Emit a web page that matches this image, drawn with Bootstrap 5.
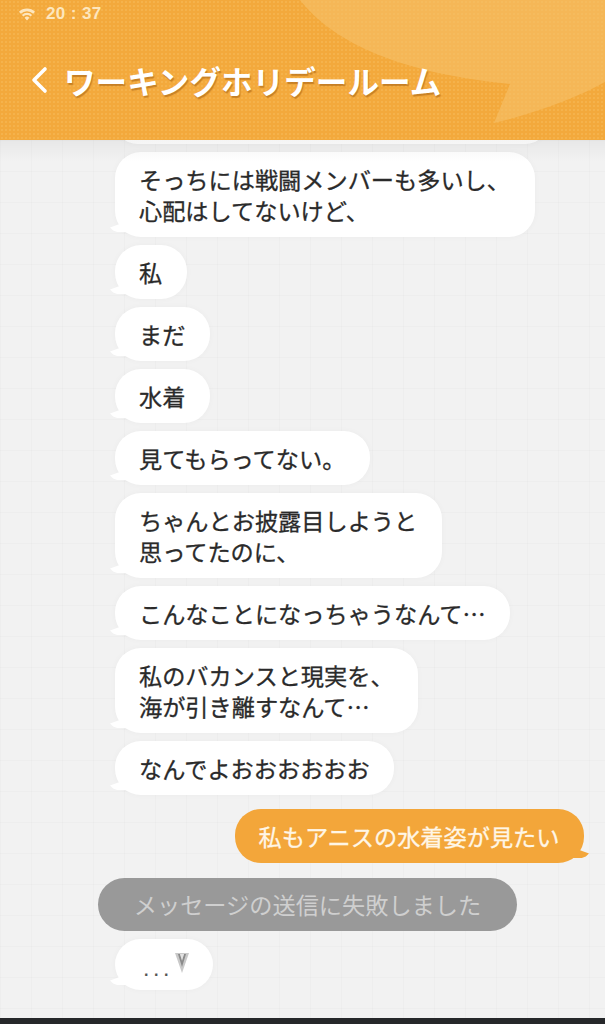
<!DOCTYPE html>
<html lang="ja">
<head>
<meta charset="utf-8">
<title>ワーキングホリデールーム</title>
<link href="https://cdn.jsdelivr.net/npm/bootstrap@5.3.0/dist/css/bootstrap.min.css" rel="stylesheet">
<style>
html,body{height:1024px;overflow:hidden;}
body{font-family:"Noto Sans CJK JP","Liberation Sans",sans-serif;background:#f1f1f1;}
.screen{height:1024px;}
.top-head{height:140px;flex:none;background-color:#f3a93c;background-image:radial-gradient(circle,rgba(255,225,160,.16) .8px,transparent 1.1px);background-size:4px 4px;color:#fff;z-index:2;}
.head-art{position:absolute;inset:0;width:100%;height:100%;}
.status-row{height:28px;padding-left:18px;gap:10px;color:#fde6bd;font-size:17px;font-weight:700;line-height:28px;font-family:"Liberation Sans",sans-serif;letter-spacing:.4px;}
.title-row{margin-top:30px;padding-left:30px;gap:16px;}
.room-title{font-size:31.6px;font-weight:700;line-height:44px;margin:0;text-shadow:1px 2px 1px rgba(170,100,20,.6);}
.chat-area{flex:1 1 auto;min-height:0;overflow:hidden;background-color:#f2f2f2;background-image:linear-gradient(rgba(0,0,0,.016) 1px,transparent 1px),linear-gradient(90deg,rgba(0,0,0,.016) 1px,transparent 1px);background-size:31px 31px;}
.chat-fade{position:absolute;left:0;right:0;top:0;height:22px;background:linear-gradient(rgba(0,0,0,.045),transparent);z-index:1;}
.msg-list{gap:8px;margin-top:-41px;}
.bubble-in,.bubble-out{position:relative;width:fit-content;font-size:23.2px;font-weight:400;-webkit-text-stroke:.3px currentColor;line-height:31px;padding:11.5px 24.500px 11.500px 24px;border-radius:26px;white-space:nowrap;}
.bubble-in{margin-left:115px;background:#fff;color:#2a2a2a;box-shadow:0 0 6px rgba(0,0,0,.03);}
.bubble-in::before{content:"";position:absolute;left:-5px;bottom:5px;width:16px;height:8px;background:#fff;clip-path:polygon(0 45%,60% 0,100% 0,100% 100%,45% 100%,20% 80%);}
.bubble-out{align-self:flex-end;margin-right:21px;margin-top:6px;background:#f3a63a;color:#fff6e6;}
.bubble-out::after{content:"";position:absolute;right:-5px;bottom:5px;width:16px;height:8px;background:#f3a63a;clip-path:polygon(100% 45%,40% 0,0 0,0 100%,55% 100%,80% 80%);}
.stub{width:433px;height:45px;}
.stub::before{display:none;}
.sys-msg{width:419px;height:53px;margin-left:98px;margin-top:7px;background:#999;color:#cfcfcf;font-size:23.2px;line-height:53px;border-radius:27px;text-align:center;}
.typing{width:98px;height:51px;padding:0 0 0 29px;color:#555;-webkit-text-stroke:0;}
.typing-dots{font-size:16px;font-weight:700;letter-spacing:5.500px;line-height:1;margin-top:13px;font-family:"Liberation Sans",sans-serif;}
.typing-mark{margin:0 0 3px 1px;}
.base-bar{height:6px;flex:none;background:#26282a;}
</style>
</head>
<body>
<div class="screen d-flex flex-column">
  <header class="top-head position-relative overflow-hidden">
    <svg class="head-art" viewBox="0 0 605 140" aria-hidden="true"><path d="M300 0C330 38 390 72 510 84L494 123C540 112 580 96 605 82V0Z" fill="#f6c069" fill-opacity=".62"/></svg>
    <div class="position-relative">
      <div class="status-row d-flex align-items-center">
        <svg width="18" height="13" viewBox="0 0 18 13" aria-hidden="true"><path d="M9 12.5 6.6 9.8a3.4 3.4 0 0 1 4.8 0ZM5.4 8.5 3.9 6.9a7.4 7.4 0 0 1 10.2 0L12.600 8.500a5.200 5.200 0 0 0-7.200 0ZM2.800 5.700 1 3.800a11.400 11.400 0 0 1 16 0l-1.800 1.900a8.900 8.900 0 0 0-12.400 0Z" fill="#fde6bd"/></svg>
        <span>20 : 37</span>
      </div>
      <div class="title-row d-flex align-items-center">
        <svg width="18" height="28" viewBox="0 0 18 28" aria-hidden="true"><path d="M15 3 4 14l11 11" fill="none" stroke="#fff" stroke-width="3.600" stroke-linecap="round" stroke-linejoin="round"/></svg>
        <h1 class="room-title">ワーキングホリデールーム</h1>
      </div>
    </div>
  </header>
  <main class="chat-area position-relative">
    <div class="chat-fade"></div>
    <div class="msg-list d-flex flex-column">
      <div class="bubble-in stub"></div>
      <div class="bubble-in">そっちには戦闘メンバーも多いし、<br>心配はしてないけど、</div>
      <div class="bubble-in">私</div>
      <div class="bubble-in">まだ</div>
      <div class="bubble-in">水着</div>
      <div class="bubble-in">見てもらってない。</div>
      <div class="bubble-in">ちゃんとお披露目しようと<br>思ってたのに、</div>
      <div class="bubble-in">こんなことになっちゃうなんて…</div>
      <div class="bubble-in">私のバカンスと現実を、<br>海が引き離すなんて…</div>
      <div class="bubble-in">なんでよおおおおおお</div>
      <div class="bubble-out">私もアニスの水着姿が見たい</div>
      <div class="sys-msg">メッセージの送信に失敗しました</div>
      <div class="bubble-in typing d-flex align-items-center">
        <span class="typing-dots">...</span>
        <svg width="14" height="20" viewBox="0 0 14 20" aria-hidden="true" class="typing-mark"><path d="M0 0H14L7 20Z" fill="#c9c9c9"/><path d="M3 1 7 14 11 1H9L7 8 5 1Z" fill="#8b8b8b"/><path d="M5 1H9L7 7Z" fill="#e2e2e2"/></svg>
      </div>
    </div>
  </main>
  <div class="base-bar"></div>
</div>
<script src="https://cdn.jsdelivr.net/npm/bootstrap@5.3.0/dist/js/bootstrap.bundle.min.js"></script>
</body>
</html>
